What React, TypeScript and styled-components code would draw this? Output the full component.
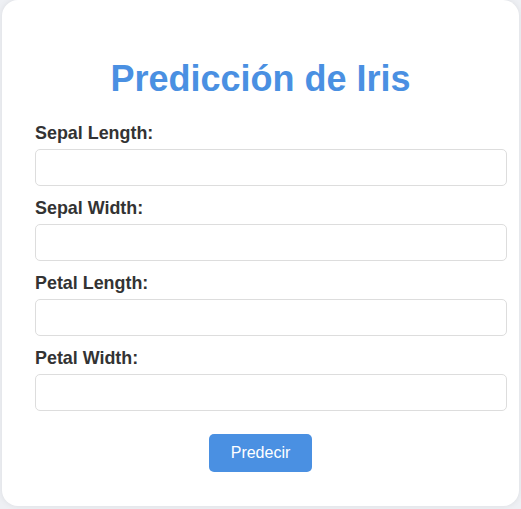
import React from "react";
import styled, { createGlobalStyle } from "styled-components";

const Global = createGlobalStyle`
  html, body {
    margin: 0;
    padding: 0;
    background: #eef0f4;
    font-family: "Liberation Sans", Arial, sans-serif;
  }
  * { box-sizing: border-box; }
`;

const Page = styled.div`
  padding: 0 2px 3px 2px;
`;

const Card = styled.div`
  background: #ffffff;
  border-radius: 16px;
  box-shadow: 0 0 6px rgba(0, 0, 0, 0.08);
  padding: 58px 33px 34px 33px;
  height: 506px;
  display: flex;
  flex-direction: column;
`;

const Title = styled.h1`
  margin: 0 0 24px 0;
  font-size: 36px;
  font-weight: bold;
  color: #4a90e2;
  text-align: center;
  line-height: 41px;
`;

const Form = styled.form`
  display: flex;
  flex-direction: column;
`;

const Field = styled.div`
  display: flex;
  flex-direction: column;
  gap: 5px;
  margin-bottom: 12px;
`;

const Label = styled.label`
  font-size: 17.9px;
  font-weight: bold;
  color: #333333;
  line-height: 21px;
`;

const Input = styled.input`
  height: 37px;
  width: calc(100% + 21px);
  border: 1px solid #dddddd;
  border-radius: 5px;
  padding: 0 10px;
  font-size: 16px;
  font-family: inherit;
  background: #fff;
  outline: none;
`;

const Actions = styled.div`
  display: flex;
  justify-content: center;
  margin-top: 11px;
`;

const Button = styled.button`
  height: 38px;
  padding: 0 22px;
  background: #4a90e2;
  color: #ffffff;
  border: none;
  border-radius: 5px;
  font-size: 16px;
  font-family: inherit;
  cursor: pointer;
`;

const fields = ["Sepal Length:", "Sepal Width:", "Petal Length:", "Petal Width:"];

export default function App() {
  return (
    <>
      <Global />
      <Page>
        <Card>
          <Title>Predicción de Iris</Title>
          <Form onSubmit={(e) => e.preventDefault()}>
            {fields.map((f) => (
              <Field key={f}>
                <Label>{f}</Label>
                <Input type="text" />
              </Field>
            ))}
            <Actions>
              <Button type="submit">Predecir</Button>
            </Actions>
          </Form>
        </Card>
      </Page>
    </>
  );
}
